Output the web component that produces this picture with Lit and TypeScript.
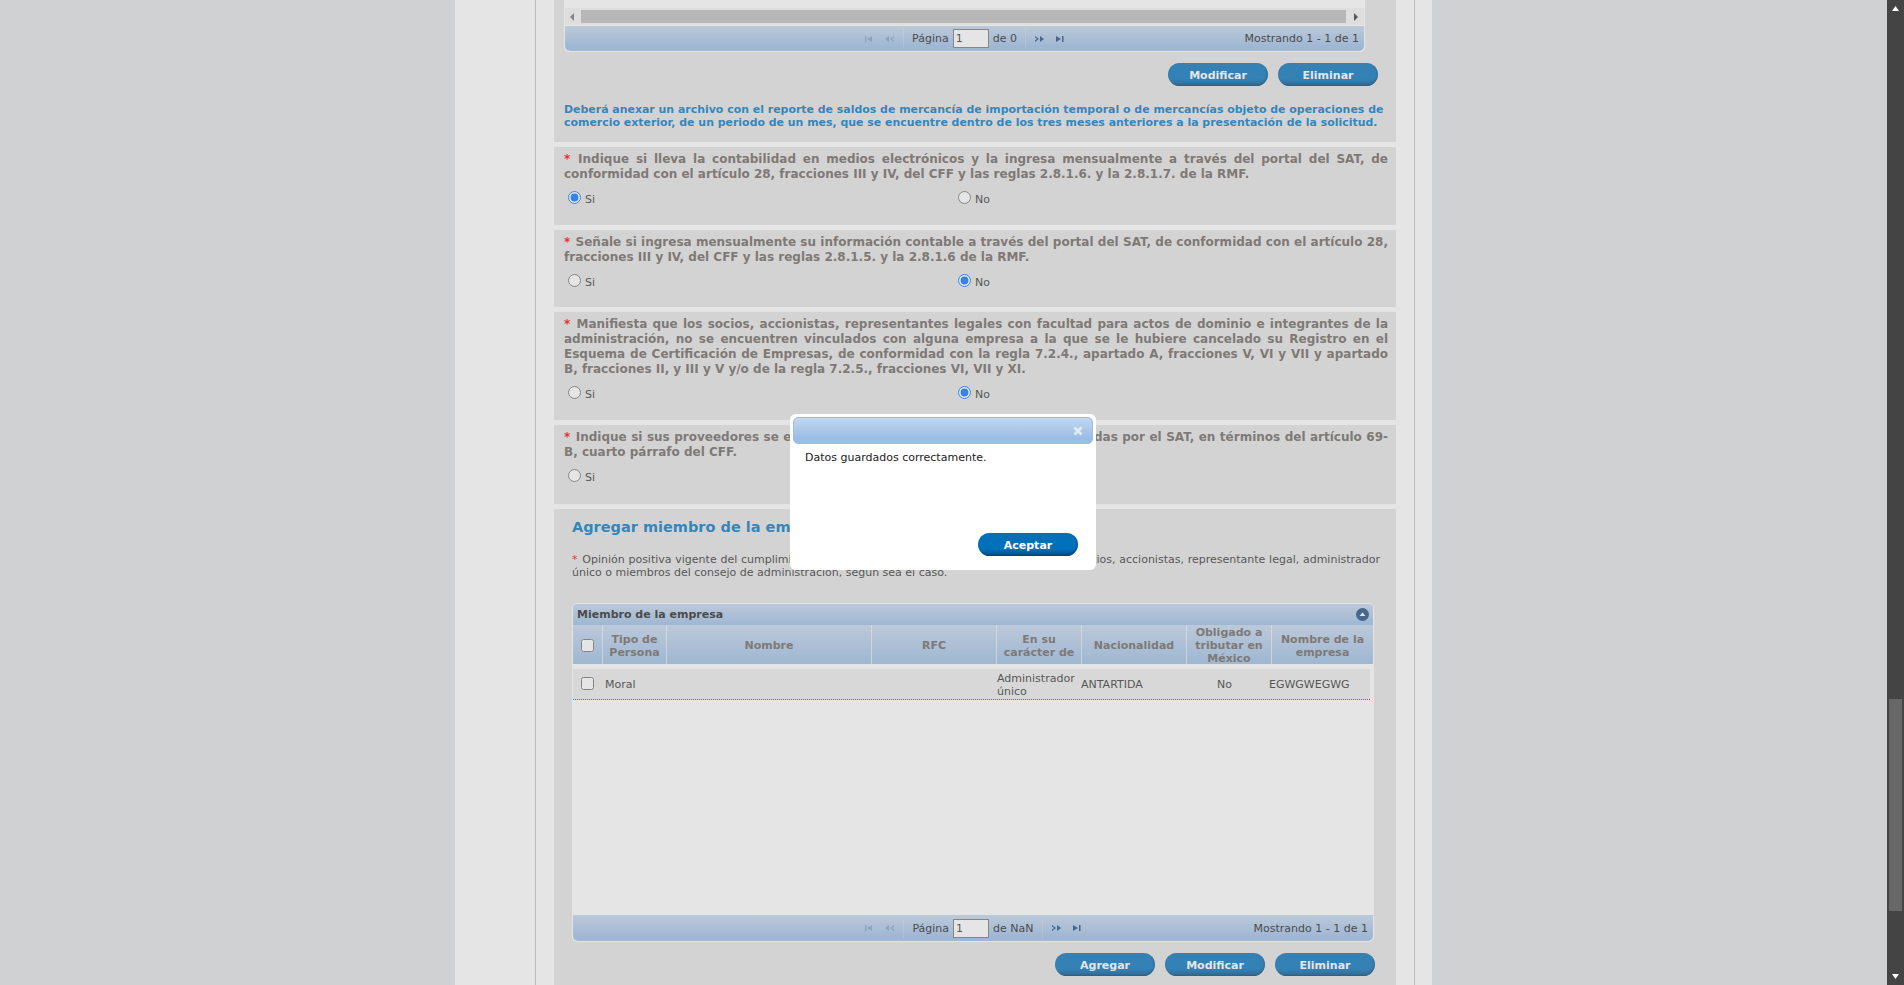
import { LitElement, html, css } from 'lit';
import { customElement } from 'lit/decorators.js';

const QUESTIONS = [
  {
    text: 'Indique si lleva la contabilidad en medios electrónicos y la ingresa mensualmente a través del portal del SAT, de conformidad con el artículo 28, fracciones III y IV, del CFF y las reglas 2.8.1.6. y la 2.8.1.7. de la RMF.',
    answer: 'si',
    bottom: 22,
  },
  {
    text: 'Señale si ingresa mensualmente su información contable a través del portal del SAT, de conformidad con el artículo 28, fracciones III y IV, del CFF y las reglas 2.8.1.5. y la 2.8.1.6 de la RMF.',
    answer: 'no',
    bottom: 21,
  },
  {
    text: 'Manifiesta que los socios, accionistas, representantes legales con facultad para actos de dominio e integrantes de la administración, no se encuentren vinculados con alguna empresa a la que se le hubiere cancelado su Registro en el Esquema de Certificación de Empresas, de conformidad con la regla 7.2.4., apartado A, fracciones V, VI y VII y apartado B, fracciones II, y III y V y/o de la regla 7.2.5., fracciones VI, VII y XI.',
    answer: 'no',
    bottom: 22,
  },
  {
    text: 'Indique si sus proveedores se encuentran en el listado de empresas publicadas por el SAT, en términos del artículo 69-B, cuarto párrafo del CFF.',
    answer: 'no',
    bottom: 23,
  },
];

const COLUMNS = ['Tipo de Persona', 'Nombre', 'RFC', 'En su carácter de', 'Nacionalidad', 'Obligado a tributar en México', 'Nombre de la empresa'];

const pagerIcon = (kind: string, off: boolean) => {
  const paths: Record<string, string> = {
    first: 'M1 1h1.500v6H1zM3 4l5-3v6z',
    prev: 'M1 4l4-3v6zM6 4l4-3v1.500L8 4l2 1.500V7z',
    next: 'M10 4L6 1v6zM5 4L1 1v1.500L3 4 1 5.500V7z',
    last: 'M8 1h1.500v6H8zM7 4L2 1v6z',
  };
  return html`<svg class="pg-icon ${off ? 'off' : ''}" width="11" height="8" viewBox="0 0 11 8"><path d=${paths[kind]} /></svg>`;
};

@customElement('app-root')
export class AppRoot extends LitElement {
  static styles = css`
    :host {
      display: flex;
      height: 985px;
      overflow: hidden;
      font-family: 'DejaVu Sans', Verdana, sans-serif;
      font-size: 11px;
      color: #333;
    }
    * {
      box-sizing: border-box;
    }
    .viewport {
      position: relative;
      flex: 1;
      min-width: 0;
      overflow: hidden;
      background: #e0e2e5;
    }
    .sheet {
      width: 977px;
      margin: 0 auto;
      height: 985px;
      padding: 0 17px 0 80px;
      background: #fff;
    }
    .frame {
      width: 880px;
      height: 985px;
      padding: 0 18px;
      border: solid #c5c1c1;
      border-width: 0 1px;
      display: flex;
      flex-direction: column;
      gap: 5px;
    }
    .section {
      background: #e6e6e6;
      flex: none;
    }
    .first {
      height: 142px;
      padding: 0 18px 0 10px;
    }
    .question {
      padding: 5px 8px 0 10px;
    }
    .question p {
      margin: 0;
      font-size: 12px;
      font-weight: bold;
      line-height: 15px;
      color: #6c6560;
      text-align: justify;
    }
    .req {
      color: #f00;
      margin-right: 1px;
    }
    .radios {
      display: grid;
      grid-template-columns: 390px 1fr;
      margin-top: 6px;
      padding-left: 4px;
      height: 15px;
    }
    .radios label {
      display: flex;
      align-items: center;
      gap: 4px;
      color: #333;
    }
    .radios input {
      margin: 0;
      width: 13px;
      height: 13px;
    }
    .radios span {
      margin-top: 5px;
    }
    .note {
      margin: 17px 0 0;
      width: 830px;
      font-size: 10.95px;
      font-weight: bold;
      line-height: 13px;
      color: #0078c4;
    }
    .actions {
      display: flex;
      justify-content: flex-end;
      gap: 10px;
      margin-top: 11px;
    }
    .btn {
      width: 100px;
      height: 23px;
      padding: 1px 0 0;
      border: 0;
      border-radius: 12px;
      background: linear-gradient(#0b6fb3, #0070bb 30%, #0070bb 70%, #004f86);
      box-shadow: inset -1px -1px 2px rgba(0, 30, 60, 0.35);
      color: #fff;
      font: bold 11px 'DejaVu Sans', Verdana, sans-serif;
    }
    .top-grid {
      width: 801px;
      padding-top: 8px;
      background: #fff;
      border-radius: 0 0 5px 5px;
      border: solid #fff;
      border-width: 0 1px 1px;
    }
    .h-scroll {
      height: 17px;
      margin-bottom: 1px;
      background: #f5f5f5;
      display: flex;
      align-items: center;
      justify-content: space-between;
      padding: 0 6px 0 5px;
    }
    .h-thumb {
      height: 13px;
      flex: 1;
      margin: 0 8px 0 7px;
      background: #bebebe;
    }
    .h-arrow {
      width: 0;
      height: 0;
      border: 4px solid transparent;
    }
    .h-arrow.left {
      border-right: 4px solid #777;
      border-left-width: 0;
    }
    .h-arrow.right {
      border-left: 4px solid #333;
      border-right-width: 0;
    }
    .pager {
      display: grid;
      grid-template-columns: 1fr auto 1fr;
      align-items: center;
      height: 25px;
      padding: 0 5px;
      background: linear-gradient(#c5d7ee, #9abde6 85%);
      border-radius: 0 0 5px 5px;
      color: #222;
    }
    .pg-center {
      grid-column: 2;
      display: flex;
      align-items: center;
    }
    .pg-group {
      display: flex;
      align-items: center;
      gap: 9px;
    }
    .pg-icon {
      fill: #1c4d80;
    }
    .pg-icon.off {
      opacity: 0.3;
    }
    .pg-sep {
      width: 1px;
      height: 19px;
      margin: 0 8px;
      background: rgba(255, 255, 255, 0.2);
    }
    .pg-input {
      width: 36px;
      height: 19px;
      margin: 0 4px;
      padding: 0 2px;
      border: 1px solid #777;
      background: #fff;
      font: inherit;
      color: #333;
    }
    .pg-count {
      text-align: right;
    }
    .members {
      height: 476px;
      padding: 8px 21px 0 18px;
    }
    .members h2 {
      margin: 0;
      font-size: 14.5px;
      line-height: 20px;
      font-weight: bold;
      color: #0078c4;
    }
    .req-note {
      margin: 16px 0 0;
      width: 808px;
      line-height: 13px;
    }
    .req-note .line {
      display: block;
      text-align-last: justify;
    }
    .grid {
      width: 802px;
      margin-top: 24px;
      background: #fff;
      border: 1px solid #fff;
      border-radius: 5px;
    }
    .grid .pager {
      height: 26px;
    }
    .grid-title {
      display: flex;
      align-items: center;
      justify-content: space-between;
      height: 21px;
      padding: 0 4px;
      border-radius: 4px 4px 0 0;
      background: linear-gradient(#c5d7ee, #9abde6);
      font-size: 11px;
      font-weight: bold;
      color: #222;
    }
    .collapse {
      display: flex;
      width: 13px;
      height: 13px;
    }
    .grid-head {
      display: grid;
      grid-template-columns: 30px 64px 205px 125px 85px 105px 85px 1fr;
      height: 39px;
      background: linear-gradient(#c5d7ee, #9abde6);
    }
    .grid-head > div {
      display: flex;
      align-items: center;
      justify-content: center;
      padding: 1px 2px 0;
      border-right: 1px solid rgba(255, 255, 255, 0.6);
      font-size: 11px;
      font-weight: bold;
      line-height: 13px;
      text-align: center;
      color: #6c6560;
    }
    .grid-head > div:last-child {
      border-right: 0;
    }
    .grid-head input,
    .grid-row input {
      margin: 0;
      width: 13px;
      height: 13px;
    }
    .grid-body {
      height: 251px;
      padding-top: 5px;
    }
    .grid-row {
      display: grid;
      grid-template-columns: 30px 64px 203px 125px 84px 103px 85px 1fr;
      width: 797px;
      height: 31px;
      background: #ececec;
      border-bottom: 1px dotted #0071a8;
    }
    .grid-row > div {
      display: flex;
      align-items: center;
      padding: 1px 2px 0;
      line-height: 13px;
    }
    .grid-row .chk {
      justify-content: center;
      padding: 0 2px 2px 0;
    }
    .grid-row .mid {
      justify-content: center;
    }
    .overlay {
      position: absolute;
      inset: 0;
      display: flex;
      align-items: center;
      justify-content: center;
      padding: 0 1px 1px 0;
      background: rgba(170, 170, 170, 0.3);
    }
    .modal {
      display: flex;
      flex-direction: column;
      width: 306px;
      height: 156px;
      padding: 3px;
      background: #fff;
      border-radius: 6px;
    }
    .modal-title {
      display: flex;
      align-items: center;
      justify-content: flex-end;
      height: 27px;
      padding: 0 9px;
      border: 1px solid #9abde6;
      border-radius: 5px;
      background: linear-gradient(#c5d7ee, #9abde6 80%);
    }
    .modal-title svg {
      display: block;
    }
    .modal-text {
      flex: 1;
      padding: 7px 12px 0;
      color: #222;
      line-height: 13px;
    }
    .modal-actions {
      display: flex;
      justify-content: flex-end;
      padding: 0 15px 11px 0;
    }
    .scrollbar {
      position: relative;
      flex: none;
      width: 17px;
      background: #444;
    }
    .scrollbar svg {
      position: absolute;
      left: 5px;
    }
    .sb-thumb {
      position: absolute;
      top: 699px;
      left: 2px;
      width: 13px;
      height: 212px;
      background: #686868;
    }
  `;

  private renderPager(total: string) {
    return html`
      <div class="pager">
        <div class="pg-center">
          <div class="pg-group">${pagerIcon('first', true)}${pagerIcon('prev', true)}</div>
          <div class="pg-sep"></div>
          <span>Página</span>
          <input class="pg-input" value="1" />
          <span>de ${total}</span>
          <div class="pg-sep"></div>
          <div class="pg-group">${pagerIcon('next', false)}${pagerIcon('last', false)}</div>
        </div>
        <div class="pg-count">Mostrando 1 - 1 de 1</div>
      </div>
    `;
  }

  private renderQuestion(q: (typeof QUESTIONS)[number], index: number) {
    return html`
      <div class="section question" style="padding-bottom:${q.bottom}px">
        <p><span class="req">*</span> ${q.text}</p>
        <div class="radios">
          <label><input type="radio" name="q${index}" ?checked=${q.answer === 'si'} /><span>Si</span></label>
          <label><input type="radio" name="q${index}" ?checked=${q.answer === 'no'} /><span>No</span></label>
        </div>
      </div>
    `;
  }

  render() {
    return html`
      <div class="viewport">
        <div class="sheet">
          <div class="frame">
            <div class="section first">
              <div class="top-grid">
                <div class="h-scroll">
                  <div class="h-arrow left"></div>
                  <div class="h-thumb"></div>
                  <div class="h-arrow right"></div>
                </div>
                ${this.renderPager('0')}
              </div>
              <div class="actions">
                <button class="btn">Modificar</button>
                <button class="btn">Eliminar</button>
              </div>
              <p class="note">
                Deberá anexar un archivo con el reporte de saldos de mercancía de importación temporal o de mercancías objeto de operaciones de comercio exterior, de un periodo de un mes, que se encuentre dentro de los tres meses anteriores a la presentación de la solicitud.
              </p>
            </div>
            ${QUESTIONS.map((q, i) => this.renderQuestion(q, i))}
            <div class="section members">
              <h2>Agregar miembro de la empresa</h2>
              <p class="req-note">
                <span class="line"><span class="req">*</span> Opinión positiva vigente del cumplimiento de obligaciones fiscales de la empresa, de los socios, accionistas, representante legal, administrador</span>
                único o miembros del consejo de administración, según sea el caso.
              </p>
              <div class="grid">
                <div class="grid-title">
                  <span>Miembro de la empresa</span>
                  <svg class="collapse" viewBox="0 0 13 13">
                    <circle cx="6.500" cy="6.500" r="6.500" fill="#1c4d80" />
                    <path d="M3.500 8l3-3.500 3 3.500z" fill="#fff" />
                  </svg>
                </div>
                <div class="grid-head">
                  <div><input type="checkbox" /></div>
                  ${COLUMNS.map((c) => html`<div>${c}</div>`)}
                </div>
                <div class="grid-body">
                  <div class="grid-row">
                    <div class="chk"><input type="checkbox" /></div>
                    <div>Moral</div>
                    <div></div>
                    <div></div>
                    <div>Administrador único</div>
                    <div>ANTARTIDA</div>
                    <div class="mid">No</div>
                    <div>EGWGWEGWG</div>
                  </div>
                </div>
                ${this.renderPager('NaN')}
              </div>
              <div class="actions">
                <button class="btn">Agregar</button>
                <button class="btn">Modificar</button>
                <button class="btn">Eliminar</button>
              </div>
            </div>
          </div>
        </div>
        <div class="overlay">
          <div class="modal">
            <div class="modal-title">
              <svg width="10" height="10" viewBox="0 0 10 10">
                <path d="M1.500 1.500l7 7M8.500 1.500l-7 7" stroke="#e3ebf7" stroke-width="2.800" fill="none" />
              </svg>
            </div>
            <div class="modal-text">Datos guardados correctamente.</div>
            <div class="modal-actions"><button class="btn">Aceptar</button></div>
          </div>
        </div>
      </div>
      <div class="scrollbar">
        <svg style="top:6px" width="7" height="5" viewBox="0 0 7 5"><path d="M3.500 0L7 5H0z" fill="#fff" /></svg>
        <div class="sb-thumb"></div>
        <svg style="top:974px" width="7" height="5" viewBox="0 0 7 5"><path d="M0 0h7L3.500 5z" fill="#fff" /></svg>
      </div>
    `;
  }
}
